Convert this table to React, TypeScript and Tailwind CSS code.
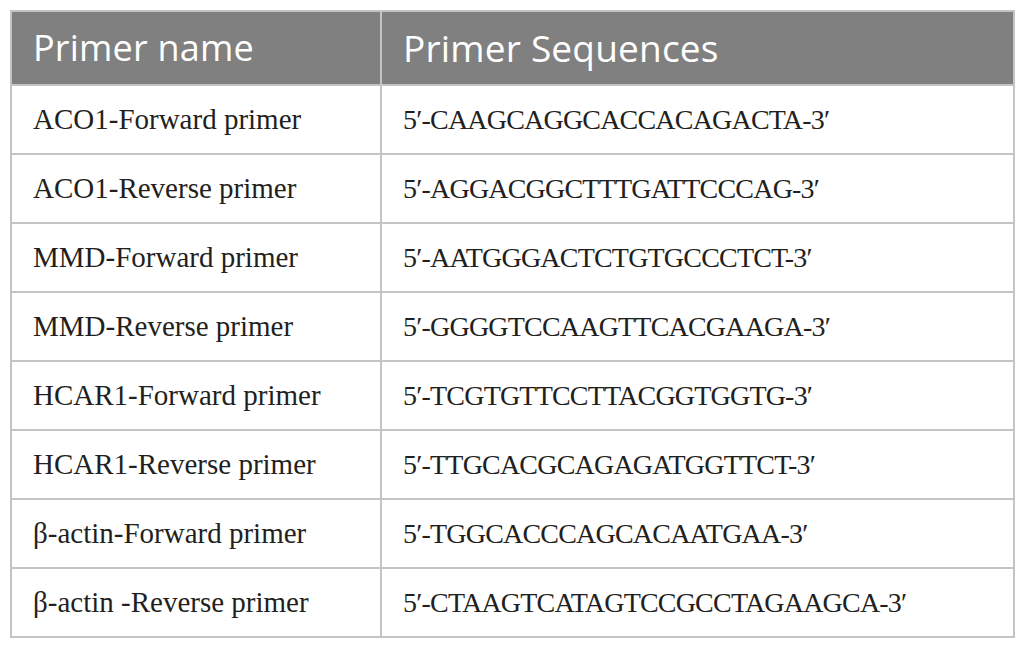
const rows: [string, string][] = [
  ["ACO1-Forward primer", "5′-CAAGCAGGCACCACAGACTA-3′"],
  ["ACO1-Reverse primer", "5′-AGGACGGCTTTGATTCCCAG-3′"],
  ["MMD-Forward primer", "5′-AATGGGACTCTGTGCCCTCT-3′"],
  ["MMD-Reverse primer", "5′-GGGGTCCAAGTTCACGAAGA-3′"],
  ["HCAR1-Forward primer", "5′-TCGTGTTCCTTACGGTGGTG-3′"],
  ["HCAR1-Reverse primer", "5′-TTGCACGCAGAGATGGTTCT-3′"],
  ["β-actin-Forward primer", "5′-TGGCACCCAGCACAATGAA-3′"],
  ["β-actin -Reverse primer", "5′-CTAAGTCATAGTCCGCCTAGAAGCA-3′"],
];

export default function App() {
  return (
    <div className="w-[1025px] h-[649px] bg-white pt-[10px] pl-[10px]">
      <table className="w-[1005px] border-collapse border-2 border-[#c4c4c4] text-[#231f20]">
        <thead>
          <tr className="bg-[#808080] h-[74px]">
            <th className="w-[370px] border-2 border-[#c4c4c4] pl-[21px] text-left font-normal text-white text-[36px] tracking-[0.2px] font-['Open_Sans',sans-serif]">
              Primer name
            </th>
            <th className="border-2 border-[#c4c4c4] pl-[21px] text-left font-normal text-white text-[37px] tracking-[0.2px] font-['Open_Sans',sans-serif]">
              Primer Sequences
            </th>
          </tr>
        </thead>
        <tbody>
          {rows.map(([name, seq]) => (
            <tr key={name} className="h-[69px]">
              <td className="border-2 border-[#c4c4c4] pl-[21px] text-[29px] font-['Liberation_Serif',serif]">{name}</td>
              <td className="border-2 border-[#c4c4c4] pl-[21px] text-[28px] tracking-[-0.8px] font-['Liberation_Serif',serif]">{seq}</td>
            </tr>
          ))}
        </tbody>
      </table>
    </div>
  );
}
